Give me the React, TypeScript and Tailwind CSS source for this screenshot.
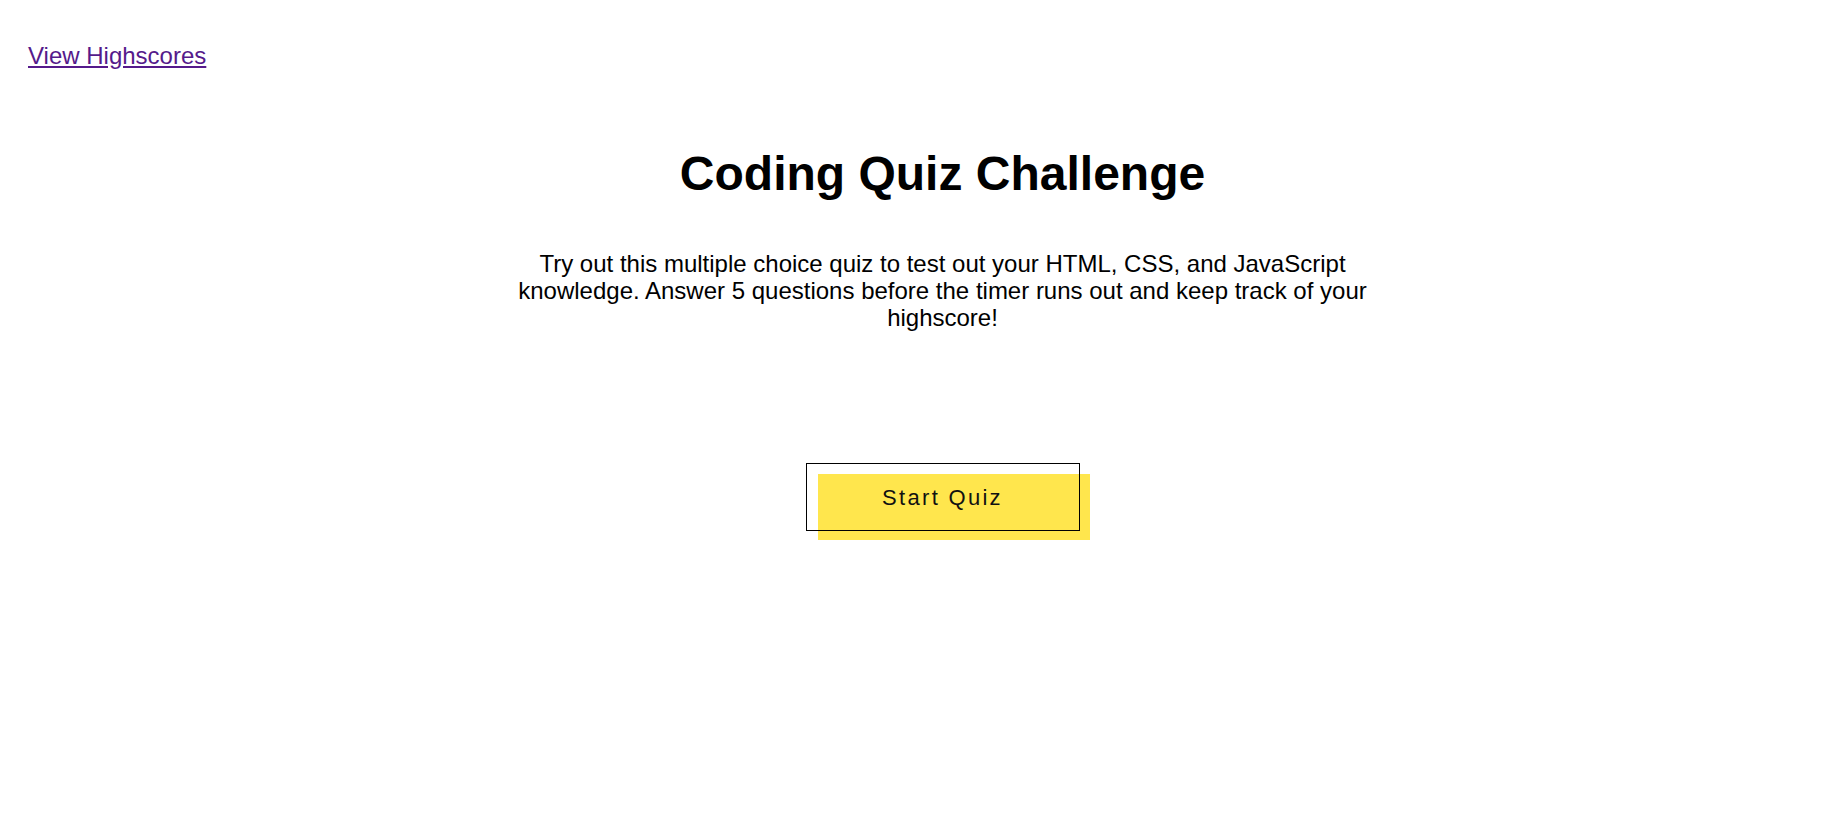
import React from "react";

export default function App() {
  return (
    <div className="min-h-screen w-full bg-white text-black" style={{ fontFamily: '"Liberation Sans", Arial, sans-serif' }}>
      <header className="pl-[28px] pt-[42px]">
        <a href="#" className="text-[24px] leading-[27.6px] text-[#551a8b] underline">
          View Highscores
        </a>
      </header>
      <main className="flex flex-col items-center pl-[43px] pt-[75px]">
        <h1 className="text-[48px] font-bold leading-[55px] text-black">Coding Quiz Challenge</h1>
        <p className="mt-[49px] w-[880px] text-center text-[24px] leading-[27px]">
          Try out this multiple choice quiz to test out your HTML, CSS, and JavaScript knowledge. Answer 5 questions before the timer runs out and keep track of your highscore!
        </p>
        <div className="mt-[143px] pl-[22px]">
          <div className="relative h-[66px] w-[272px] bg-[#ffe64d]">
            <button className="absolute -left-[12px] -top-[11px] flex h-[68px] w-[274px] items-center justify-center border border-black bg-transparent text-[22px] tracking-[2.3px] text-[#111]">
              Start Quiz
            </button>
          </div>
        </div>
      </main>
    </div>
  );
}
